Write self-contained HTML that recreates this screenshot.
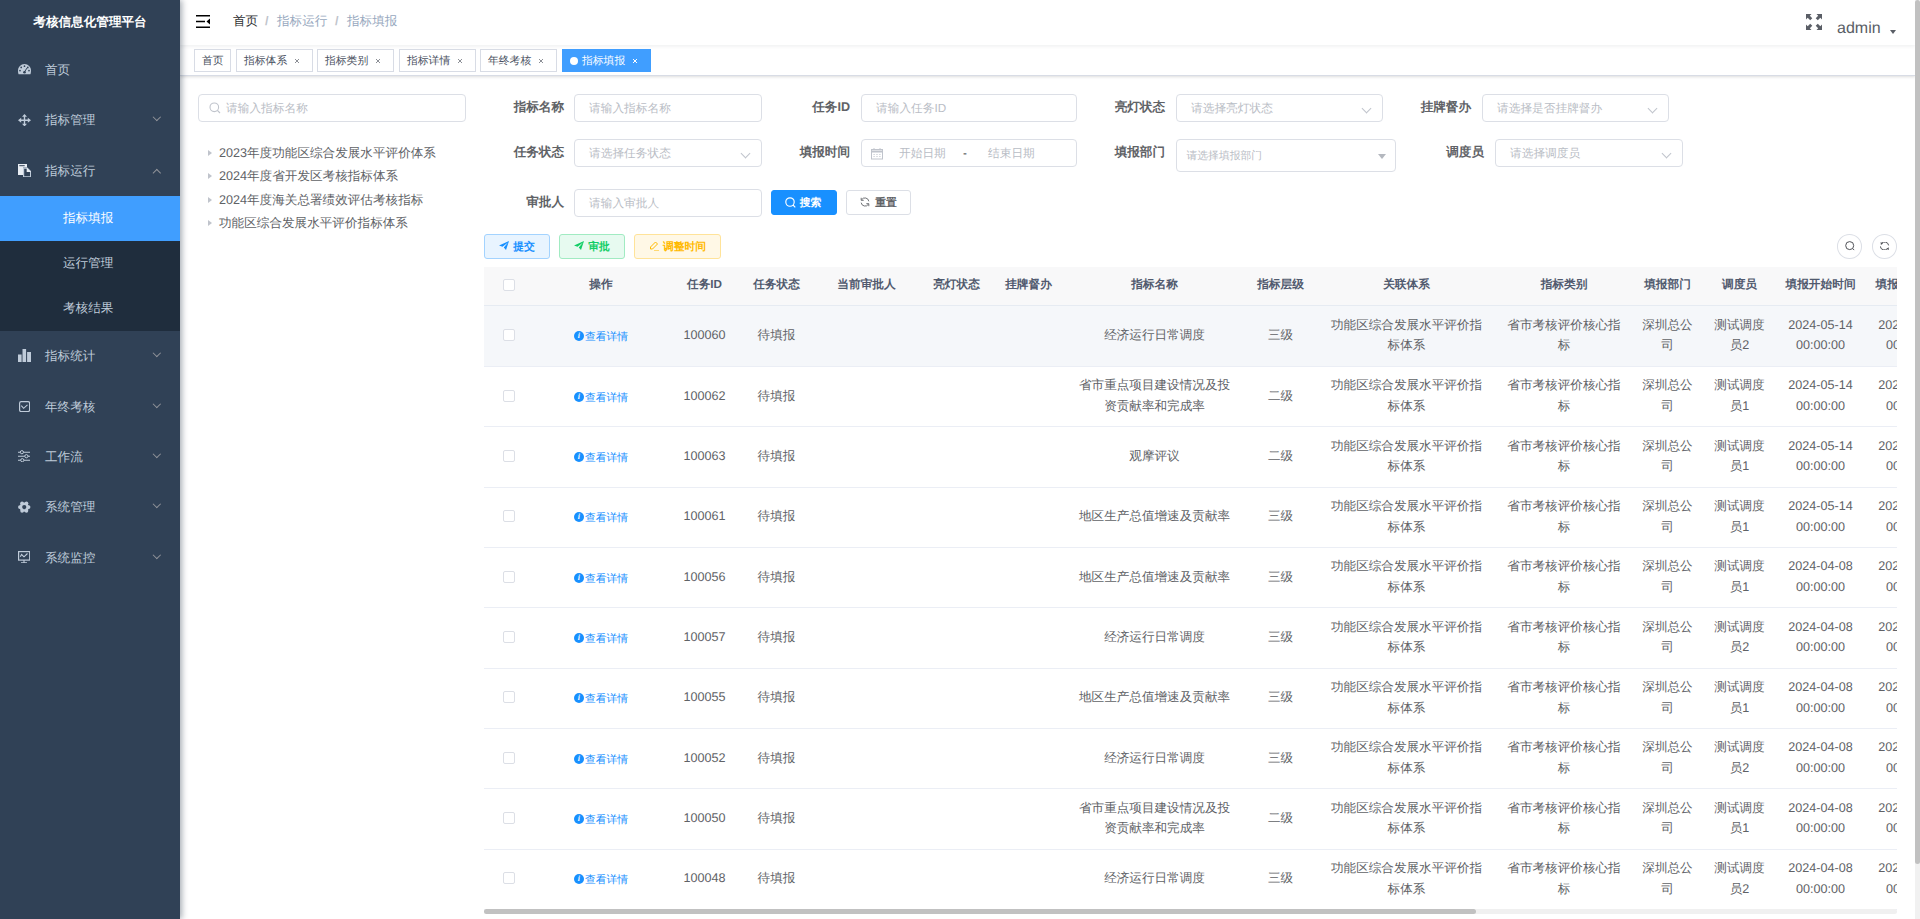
<!DOCTYPE html>
<html><head><meta charset="utf-8"><title>指标填报</title><style>
*{box-sizing:border-box;margin:0;padding:0}
html,body{width:1920px;height:919px;overflow:hidden;background:#fff;font-family:"Liberation Sans",sans-serif;color:#606266;text-rendering:geometricPrecision}
.abs{position:absolute}
#side{position:absolute;left:0;top:0;width:180px;height:919px;background:#304156;z-index:3;box-shadow:2px 0 6px rgba(0,21,41,.35)}
.logo{position:absolute;left:0;top:0;width:180px;height:45px;line-height:45px;text-align:center;color:#fff;font-weight:bold;font-size:12.6px}
.mi{position:absolute;left:0;width:180px;height:50.4px;color:#bfcbd9;font-size:12.6px;line-height:50.4px}
.mi .tx{position:absolute;left:45px;top:0}
.mi svg.ic{position:absolute;left:18px;top:19px}
.mi .chev{position:absolute;left:153px;top:22px;width:8px;height:8px}
.sub{position:absolute;left:0;top:196.2px;width:180px;height:135px;background:#1f2d3d}
.si{position:absolute;left:0;width:180px;height:45px;line-height:45px;color:#bfcbd9;font-size:12.6px}
.si .tx{position:absolute;left:63px;top:0}
.si.act{background:#409eff;color:#fff}
#nav{position:absolute;left:180px;top:0;width:1735px;height:45px;background:#fff;box-shadow:0 1px 4px rgba(0,21,41,.08);z-index:2}
.bc{position:absolute;top:0;line-height:43px;font-size:12.6px;white-space:nowrap}
#tags{position:absolute;left:180px;top:45px;width:1735px;height:31px;background:#fff;border-bottom:1px solid #d8dce5;box-shadow:0 1px 3px 0 rgba(0,0,0,.12),0 0 3px 0 rgba(0,0,0,.04);z-index:1}
.tag{position:absolute;top:4px;height:23px;border:1px solid #d8dce5;color:#495060;background:#fff;font-size:10.8px;white-space:nowrap}
.tag .x{position:absolute;top:8px}
.tt{position:absolute;top:0;line-height:22px;font-weight:normal}
.tag.act{background:#409eff;border-color:#409eff;color:#fff}
.tag.act .dot{position:absolute;left:7px;top:6.5px;width:8px;height:8px;border-radius:50%;background:#fff}
.inp{position:absolute;height:28px;border:1px solid #dcdfe6;border-radius:4px;background:#fff;font-size:11.7px;color:#b9bdc5;line-height:27.6px;padding-left:14px;white-space:nowrap;overflow:hidden}
.lbl{position:absolute;font-size:12.6px;font-weight:bold;color:#606266;line-height:26.6px;text-align:right;white-space:nowrap}
.arr{position:absolute;right:12px;top:10px;width:7px;height:7px;border-right:1px solid #c0c4cc;border-bottom:1px solid #c0c4cc;transform:rotate(45deg)}
.btn{position:absolute;height:25px;border-radius:3px;font-size:10.8px;line-height:24.4px;font-weight:bold;text-align:center;white-space:nowrap;border:1px solid}
.tree{position:absolute;left:208px;font-size:12.6px;color:#606266;white-space:nowrap;line-height:23px}
.tree .tri{display:inline-block;width:0;height:0;border-left:4px solid #c0c4cc;border-top:3.5px solid transparent;border-bottom:3.5px solid transparent;margin-right:7px;vertical-align:1px}
#tblwrap{position:absolute;left:484px;top:267px;width:1413px;height:648px;overflow:hidden}
table.tb{border-collapse:collapse;table-layout:fixed}
.tb th{height:38.5px;background:#f8f8f9;color:#515a6e;font-size:11.7px;font-weight:bold;border-bottom:1px solid #e6ebf2;text-align:center;padding:0}
.tb td{border-bottom:1px solid #ebeef5;font-size:12.6px;color:#606266;text-align:center;padding:0;background:#fff}
.tb tr.hov td{background:#f5f7fa}
.tb .cell{line-height:20.7px;padding:0 9px;white-space:nowrap;position:relative;top:-.8px}
.tb th .cell{top:-.6px}
.cb{display:inline-block;width:12px;height:12px;margin-left:1px;border:1px solid #dcdfe6;border-radius:2px;background:#fff;vertical-align:middle}
.lnk{color:#1890ff;font-size:10.8px}
.ii{display:inline-block;width:10px;height:10px;border-radius:50%;background:#1890ff;color:#fff;font-size:8px;line-height:10px;font-style:italic;font-weight:bold;text-align:center;vertical-align:2px;margin-right:1px;font-family:"Liberation Serif",serif}
#hs{position:absolute;left:484px;top:909px;width:1413px;height:5px;background:#f0f0f0;border-radius:3px}
#hs i{position:absolute;left:0;top:0;width:992px;height:5px;background:#c1c1c1;border-radius:3px}
#vs{position:absolute;left:1915px;top:0;width:5px;height:919px;background:#f1f1f1;z-index:5}
#vs i{position:absolute;left:0;top:0;width:5px;height:864px;background:#c1c1c1;border-radius:3px}
.cir{position:absolute;top:234px;width:25.3px;height:24.8px;border:1px solid #dcdfe6;border-radius:50%;background:#fff}

.tb th .cb{position:relative;top:-1.5px}
.tb td .cb{position:relative;top:-1.8px}
.lnk{position:relative;top:1.6px}

</style></head><body>
<div id="side">
  <div class="logo">考核信息化管理平台</div>
  <div class="mi" style="top:45px"><svg class="ic" style="left:18px;top:19px" width="13" height="10.5" viewBox="0 0 13 10.5"><path d="M.6 10.3C.2 9.3 0 8.2 0 6.6 0 3 2.9 0 6.5 0S13 3 13 6.6c0 1.6-.2 2.7-.6 3.7z" fill="#bfcbd9"/><g fill="#304156"><circle cx="2" cy="6.6" r=".85"/><circle cx="3.2" cy="3.4" r=".85"/><circle cx="6.5" cy="2.2" r=".85"/><circle cx="9.8" cy="3.4" r=".85"/><circle cx="11" cy="6.6" r=".85"/><circle cx="6.5" cy="8.3" r="1.3"/></g><path d="M6.2 8.3L9.3 3.6" stroke="#304156" stroke-width="1"/></svg><span class="tx">首页</span></div>
  <div class="mi" style="top:95.4px"><svg class="ic" style="left:18px;top:18.3px" width="13" height="12.5" viewBox="0 0 13 12.5"><path d="M6.5 0L9 2.8H7.2v2.7h2.6V3.7L13 6.25 9.8 8.8V7H7.2v2.7H9l-2.5 2.8L4 9.7h1.8V7H3.2v1.8L0 6.25 3.2 3.7v1.8h2.6V2.8H4z" fill="#bfcbd9"/></svg><span class="tx">指标管理</span><span class="chev" style="border-right:1px solid #909399;border-bottom:1px solid #909399;transform:rotate(45deg);top:19px;left:154px;width:5.6px;height:5.6px"></span></div>
  <div class="mi" style="top:145.8px"><svg class="ic" style="left:18px;top:17.9px" width="13.2" height="13.4" viewBox="0 0 13.2 13.4"><path d="M0 0h9v3.5H5v7.5H0z" fill="#e8edf3"/><path d="M1.3 1.7h5.4" stroke="#304156" stroke-width="1"/><path d="M5.6 4.1h3.6l3.4 3.4v5.3H5.6z" fill="none" stroke="#bfcbd9" stroke-width="1.2"/><path d="M8.7 3.6l4.5 4.5H8.7z" fill="#e8edf3"/></svg><span class="tx">指标运行</span><span class="chev" style="border-left:1px solid #909399;border-top:1px solid #909399;transform:rotate(45deg);top:24.5px;left:154px;width:5.6px;height:5.6px"></span></div>
  <div class="sub">
    <div class="si act" style="top:0"><span class="tx">指标填报</span></div>
    <div class="si" style="top:45px"><span class="tx">运行管理</span></div>
    <div class="si" style="top:90px"><span class="tx">考核结果</span></div>
  </div>
  <div class="mi" style="top:331.2px"><svg class="ic" style="left:18px;top:17.7px" width="13" height="13" viewBox="0 0 13 13"><path d="M0 5.5h3.6V13H0zM4.5 0h3.6v13H4.5zM9.1 3h3.9v10H9.1z" fill="#bfcbd9"/></svg><span class="tx">指标统计</span><span class="chev" style="border-right:1px solid #909399;border-bottom:1px solid #909399;transform:rotate(45deg);top:19px;left:154px;width:5.6px;height:5.6px"></span></div>
  <div class="mi" style="top:381.6px"><svg class="ic" style="left:18.9px;top:19.3px" width="11.2" height="11.2" viewBox="0 0 11.2 11.2"><rect x=".6" y=".6" width="10" height="10" rx="1.6" fill="none" stroke="#bfcbd9" stroke-width="1.2"/><path d="M2.3 4.6l2.3 2.7 3.9-3.4" fill="none" stroke="#bfcbd9" stroke-width="1.1"/></svg><span class="tx">年终考核</span><span class="chev" style="border-right:1px solid #909399;border-bottom:1px solid #909399;transform:rotate(45deg);top:19px;left:154px;width:5.6px;height:5.6px"></span></div>
  <div class="mi" style="top:432px"><svg class="ic" style="left:18px;top:18.3px" width="12.3" height="12" viewBox="0 0 12.3 12"><path d="M0 2.2h12.3M0 6.2h12.3M0 10.2h12.3" stroke="#bfcbd9" stroke-width="1.1"/><circle cx="3.9" cy="2.2" r="1.6" fill="#304156" stroke="#bfcbd9" stroke-width="1"/><circle cx="8.4" cy="6.2" r="1.6" fill="#304156" stroke="#bfcbd9" stroke-width="1"/><circle cx="4.3" cy="10.2" r="1.6" fill="#304156" stroke="#bfcbd9" stroke-width="1"/></svg><span class="tx">工作流</span><span class="chev" style="border-right:1px solid #909399;border-bottom:1px solid #909399;transform:rotate(45deg);top:19px;left:154px;width:5.6px;height:5.6px"></span></div>
  <div class="mi" style="top:482.4px"><svg class="ic" style="left:18px;top:18.5px" width="12.5" height="12.2" viewBox="0 0 12.5 12.2"><g fill="#bfcbd9"><circle cx="6.25" cy="6.1" r="4.6"/><circle cx="10.60" cy="6.10" r="1.85"/><circle cx="8.43" cy="9.87" r="1.85"/><circle cx="4.08" cy="9.87" r="1.85"/><circle cx="1.90" cy="6.10" r="1.85"/><circle cx="4.07" cy="2.33" r="1.85"/><circle cx="8.43" cy="2.33" r="1.85"/></g><circle cx="6.25" cy="6.1" r="2.1" fill="#304156"/></svg><span class="tx">系统管理</span><span class="chev" style="border-right:1px solid #909399;border-bottom:1px solid #909399;transform:rotate(45deg);top:19px;left:154px;width:5.6px;height:5.6px"></span></div>
  <div class="mi" style="top:532.8px"><svg class="ic" style="left:18px;top:17.9px" width="12.3" height="12.5" viewBox="0 0 12.3 12.5"><rect x=".6" y=".6" width="11.1" height="8.5" fill="none" stroke="#bfcbd9" stroke-width="1.2"/><path d="M2.3 5.8l1.3-2.3 2.4 2.3 3.5-3.3M6 9.1v2.5M3 11.8h6" fill="none" stroke="#bfcbd9" stroke-width="1.1"/></svg><span class="tx">系统监控</span><span class="chev" style="border-right:1px solid #909399;border-bottom:1px solid #909399;transform:rotate(45deg);top:19px;left:154px;width:5.6px;height:5.6px"></span></div>
</div>

<div id="nav">
  <svg class="abs" style="left:16px;top:14.5px" width="14" height="13" viewBox="0 0 14 13"><path d="M0 0h14v1.6H0zM0 5.7h9v1.6H0zM0 11.4h14V13H0z" fill="#000"/><path d="M14 3.5v6L10.5 6.5z" fill="#000"/></svg>
  <span class="bc" style="left:53px;color:#303133">首页</span>
  <span class="bc" style="left:85px;color:#c0c4cc;font-weight:bold">/</span>
  <span class="bc" style="left:97px;color:#97a8be">指标运行</span>
  <span class="bc" style="left:155px;color:#c0c4cc;font-weight:bold">/</span>
  <span class="bc" style="left:167px;color:#97a8be">指标填报</span>
  <svg class="abs" style="left:1626px;top:14px" width="16" height="16" viewBox="0 0 16 16"><g fill="#5a5e66"><path d="M0 0h5.5L3.8 1.7 6.3 4.2 4.2 6.3 1.7 3.8 0 5.5z"/><path d="M16 0v5.5l-1.7-1.7-2.5 2.5-2.1-2.1 2.5-2.5L10.5 0z"/><path d="M0 16v-5.5l1.7 1.7 2.5-2.5 2.1 2.1-2.5 2.5L5.5 16z"/><path d="M16 16h-5.5l1.7-1.7-2.5-2.5 2.1-2.1 2.5 2.5L16 10.5z"/></g></svg>
  <span class="abs" style="left:1657px;top:16.7px;font-size:16px;color:#5a5e66;line-height:24px">admin</span>
  <span class="abs" style="left:1710px;top:30px;width:0;height:0;border-left:3.5px solid transparent;border-right:3.5px solid transparent;border-top:4px solid #5a5e66"></span>
</div>

<div id="tags">
  <span class="tag" style="left:14px;width:37px"><b class="tt" style="left:7px">首页</b></span>
  <span class="tag" style="left:56px;width:77px"><b class="tt" style="left:7px">指标体系</b><svg class="x" style="left:57.3px" width="6" height="6" viewBox="0 0 6 6"><path d="M1 1l4 4M5 1l-4 4" stroke="#8c8f96" stroke-width="1"/></svg></span>
  <span class="tag" style="left:137px;width:77px"><b class="tt" style="left:7px">指标类别</b><svg class="x" style="left:57.3px" width="6" height="6" viewBox="0 0 6 6"><path d="M1 1l4 4M5 1l-4 4" stroke="#8c8f96" stroke-width="1"/></svg></span>
  <span class="tag" style="left:219px;width:77px"><b class="tt" style="left:7px">指标详情</b><svg class="x" style="left:57.3px" width="6" height="6" viewBox="0 0 6 6"><path d="M1 1l4 4M5 1l-4 4" stroke="#8c8f96" stroke-width="1"/></svg></span>
  <span class="tag" style="left:300px;width:77px"><b class="tt" style="left:7px">年终考核</b><svg class="x" style="left:57.3px" width="6" height="6" viewBox="0 0 6 6"><path d="M1 1l4 4M5 1l-4 4" stroke="#8c8f96" stroke-width="1"/></svg></span>
  <span class="tag act" style="left:382px;width:89px"><span class="dot"></span><b class="tt" style="left:19px">指标填报</b><svg class="x" style="left:69px" width="6" height="6" viewBox="0 0 6 6"><path d="M1 1l4 4M5 1l-4 4" stroke="#fff" stroke-width="1"/></svg></span>
</div>

<!-- left tree -->
<div class="inp" style="left:198px;top:94px;width:268px;padding-left:27px">请输入指标名称<svg class="abs" style="left:10px;top:7px" width="12" height="12" viewBox="0 0 12 12"><circle cx="5.3" cy="5.3" r="4.3" fill="none" stroke="#c0c4cc" stroke-width="1.1"/><path d="M8.5 8.5l2.5 2.5" stroke="#c0c4cc" stroke-width="1.1"/></svg></div>
<div class="tree" style="top:141.5px"><span class="tri"></span>2023年度功能区综合发展水平评价体系</div>
<div class="tree" style="top:165px"><span class="tri"></span>2024年度省开发区考核指标体系</div>
<div class="tree" style="top:188.5px"><span class="tri"></span>2024年度海关总署绩效评估考核指标</div>
<div class="tree" style="top:212px"><span class="tri"></span>功能区综合发展水平评价指标体系</div>

<!-- form -->
<div class="lbl" style="left:474px;top:94px;width:90px">指标名称</div>
<div class="inp" style="left:574px;top:94px;width:188px">请输入指标名称</div>
<div class="lbl" style="left:760px;top:94px;width:90px">任务ID</div>
<div class="inp" style="left:861px;top:94px;width:216px">请输入任务ID</div>
<div class="lbl" style="left:1075px;top:94px;width:90px">亮灯状态</div>
<div class="inp" style="left:1176px;top:94px;width:207px">请选择亮灯状态<span class="arr"></span></div>
<div class="lbl" style="left:1381px;top:94px;width:90px">挂牌督办</div>
<div class="inp" style="left:1482px;top:94px;width:187px">请选择是否挂牌督办<span class="arr"></span></div>

<div class="lbl" style="left:474px;top:139px;width:90px">任务状态</div>
<div class="inp" style="left:574px;top:139px;width:188px">请选择任务状态<span class="arr"></span></div>
<div class="lbl" style="left:760px;top:139px;width:90px">填报时间</div>
<div class="inp" style="left:861px;top:139px;width:216px;padding-left:0"><svg class="abs" style="left:9px;top:8px" width="12" height="12" viewBox="0 0 12 12"><rect x=".5" y="1.5" width="11" height="9.5" fill="none" stroke="#c0c4cc"/><path d="M.5 3.5h11" stroke="#c0c4cc" stroke-width="2"/><path d="M3 0v2M9 0v2M2.5 6.5h1.2M5.4 6.5h1.2M8.3 6.5h1.2M2.5 8.5h1.2M5.4 8.5h1.2M8.3 8.5h1.2" stroke="#c0c4cc" stroke-width=".9"/></svg><span class="abs" style="left:37px">开始日期</span><span class="abs" style="left:101px;color:#303133">-</span><span class="abs" style="left:126px">结束日期</span></div>
<div class="lbl" style="left:1075px;top:139px;width:90px">填报部门</div>
<div class="inp" style="left:1176px;top:139px;width:220px;height:33px;line-height:32.2px;padding-left:9.5px;font-size:10.8px">请选择填报部门<span class="abs" style="right:9.5px;top:13.5px;width:0;height:0;border-left:4.4px solid transparent;border-right:4.4px solid transparent;border-top:5px solid #b4b8bf"></span></div>
<div class="lbl" style="left:1394px;top:139px;width:90px">调度员</div>
<div class="inp" style="left:1495px;top:139px;width:188px">请选择调度员<span class="arr"></span></div>

<div class="lbl" style="left:474px;top:188.5px;width:90px">审批人</div>
<div class="inp" style="left:574px;top:188.5px;width:188px">请输入审批人</div>
<div class="btn" style="left:771px;top:190px;width:66px;background:#1890ff;border-color:#1890ff;color:#fff"><svg style="vertical-align:-1.5px;margin-right:4px;margin-left:-2px" width="11" height="11" viewBox="0 0 11 11"><circle cx="5" cy="5" r="4.2" fill="none" stroke="#fff" stroke-width="1.15"/><path d="M8 8l2.3 2.3" stroke="#fff" stroke-width="1.15"/></svg>搜索</div>
<div class="btn" style="left:846px;top:190px;width:65px;background:#fff;border-color:#dcdfe6;color:#606266"><svg style="vertical-align:-1px;margin-right:5px" width="10" height="10" viewBox="0 0 10 10"><path d="M8.8 4.3A3.9 3.9 0 0 0 1.6 2.8M1.2 5.7a3.9 3.9 0 0 0 7.2 1.5" fill="none" stroke="#606266" stroke-width=".9"/><path d="M1.2 .8v2.5h2.5M8.8 9.2V6.7H6.3" fill="none" stroke="#606266" stroke-width=".9"/></svg>重置</div>

<div class="btn" style="left:484px;top:234px;width:66px;background:#e8f4ff;border-color:#a3d3ff;color:#1890ff"><svg style="vertical-align:-1px;margin-right:4px" width="10" height="10" viewBox="0 0 10 10"><path d="M0 4.5L10 0 7 9 4.8 6.5 9 1.5 3.5 5.8z" fill="#1890ff"/></svg>提交</div>
<div class="btn" style="left:559px;top:234px;width:66px;background:#e7faf0;border-color:#a1ebc2;color:#13ce66"><svg style="vertical-align:-1px;margin-right:4px" width="10" height="10" viewBox="0 0 10 10"><path d="M0 4.5L10 0 7 9 4.8 6.5 9 1.5 3.5 5.8z" fill="#13ce66"/></svg>审批</div>
<div class="btn" style="left:634px;top:234px;width:87px;background:#fff8e6;border-color:#ffe399;color:#ffba00"><svg style="vertical-align:-1px;margin-right:4px" width="10" height="10" viewBox="0 0 10 10"><path d="M6.5 1l2 2-5 5H1.5V6z" fill="none" stroke="#ffba00" stroke-width="1"/><path d="M5 10h5" stroke="#ffba00"/></svg>调整时间</div>

<div class="cir" style="left:1837px"><svg class="abs" style="left:7.3px;top:5.8px" width="11" height="11" viewBox="0 0 11 11"><circle cx="4.7" cy="4.6" r="4" fill="none" stroke="#505257" stroke-width="1"/><path d="M7.6 7.5l1.6 1.6" stroke="#505257" stroke-width="1"/></svg></div>
<div class="cir" style="left:1871.5px"><svg class="abs" style="left:7.6px;top:6.9px" width="9.5" height="8.5" viewBox="0 0 9.5 8.5"><path d="M8.6 3.4A4 3.6 0 0 0 1.3 1.6" fill="none" stroke="#505257" stroke-width="1"/><path d="M.4 4.4A4 3.6 0 0 0 7.7 6.4" fill="none" stroke="#505257" stroke-width="1"/><path d="M.6 0l2.4 1.6L.9 3z" fill="#505257"/><path d="M8.7 8.2L6.6 6.8l2.2-1.6z" fill="#505257"/></svg></div>

<div id="tblwrap">
<table class="tb" style="width:1471.5px"><colgroup><col style="width:49.5px"><col style="width:135.0px"><col style="width:72.0px"><col style="width:72.0px"><col style="width:108.0px"><col style="width:72.0px"><col style="width:72.0px"><col style="width:180.0px"><col style="width:72.0px"><col style="width:180.0px"><col style="width:135.0px"><col style="width:72.0px"><col style="width:72.0px"><col style="width:90.0px"><col style="width:90.0px"></colgroup>
<thead><tr><th><span class="cb"></span></th><th><div class="cell">操作</div></th><th><div class="cell">任务ID</div></th><th><div class="cell">任务状态</div></th><th><div class="cell">当前审批人</div></th><th><div class="cell">亮灯状态</div></th><th><div class="cell">挂牌督办</div></th><th><div class="cell">指标名称</div></th><th><div class="cell">指标层级</div></th><th><div class="cell">关联体系</div></th><th><div class="cell">指标类别</div></th><th><div class="cell">填报部门</div></th><th><div class="cell">调度员</div></th><th><div class="cell">填报开始时间</div></th><th><div class="cell">填报结束时间</div></th></tr></thead><tbody>
<tr class="hov" style="height:61px"><td><span class="cb"></span></td><td><div class="cell"><span class="lnk"><i class="ii">i</i>查看详情</span></div></td><td><div class="cell">100060</div></td><td><div class="cell">待填报</div></td><td><div class="cell"></div></td><td><div class="cell"></div></td><td><div class="cell"></div></td><td><div class="cell">经济运行日常调度</div></td><td><div class="cell">三级</div></td><td><div class="cell">功能区综合发展水平评价指<br>标体系</div></td><td><div class="cell">省市考核评价核心指<br>标</div></td><td><div class="cell">深圳总公<br>司</div></td><td><div class="cell">测试调度<br>员2</div></td><td><div class="cell">2024-05-14<br>00:00:00</div></td><td><div class="cell">2024-05-14<br>00:00:00</div></td></tr>
<tr style="height:60.35px"><td><span class="cb"></span></td><td><div class="cell"><span class="lnk"><i class="ii">i</i>查看详情</span></div></td><td><div class="cell">100062</div></td><td><div class="cell">待填报</div></td><td><div class="cell"></div></td><td><div class="cell"></div></td><td><div class="cell"></div></td><td><div class="cell">省市重点项目建设情况及投<br>资贡献率和完成率</div></td><td><div class="cell">二级</div></td><td><div class="cell">功能区综合发展水平评价指<br>标体系</div></td><td><div class="cell">省市考核评价核心指<br>标</div></td><td><div class="cell">深圳总公<br>司</div></td><td><div class="cell">测试调度<br>员1</div></td><td><div class="cell">2024-05-14<br>00:00:00</div></td><td><div class="cell">2024-05-14<br>00:00:00</div></td></tr>
<tr style="height:60.35px"><td><span class="cb"></span></td><td><div class="cell"><span class="lnk"><i class="ii">i</i>查看详情</span></div></td><td><div class="cell">100063</div></td><td><div class="cell">待填报</div></td><td><div class="cell"></div></td><td><div class="cell"></div></td><td><div class="cell"></div></td><td><div class="cell">观摩评议</div></td><td><div class="cell">二级</div></td><td><div class="cell">功能区综合发展水平评价指<br>标体系</div></td><td><div class="cell">省市考核评价核心指<br>标</div></td><td><div class="cell">深圳总公<br>司</div></td><td><div class="cell">测试调度<br>员1</div></td><td><div class="cell">2024-05-14<br>00:00:00</div></td><td><div class="cell">2024-05-14<br>00:00:00</div></td></tr>
<tr style="height:60.35px"><td><span class="cb"></span></td><td><div class="cell"><span class="lnk"><i class="ii">i</i>查看详情</span></div></td><td><div class="cell">100061</div></td><td><div class="cell">待填报</div></td><td><div class="cell"></div></td><td><div class="cell"></div></td><td><div class="cell"></div></td><td><div class="cell">地区生产总值增速及贡献率</div></td><td><div class="cell">三级</div></td><td><div class="cell">功能区综合发展水平评价指<br>标体系</div></td><td><div class="cell">省市考核评价核心指<br>标</div></td><td><div class="cell">深圳总公<br>司</div></td><td><div class="cell">测试调度<br>员1</div></td><td><div class="cell">2024-05-14<br>00:00:00</div></td><td><div class="cell">2024-05-14<br>00:00:00</div></td></tr>
<tr style="height:60.35px"><td><span class="cb"></span></td><td><div class="cell"><span class="lnk"><i class="ii">i</i>查看详情</span></div></td><td><div class="cell">100056</div></td><td><div class="cell">待填报</div></td><td><div class="cell"></div></td><td><div class="cell"></div></td><td><div class="cell"></div></td><td><div class="cell">地区生产总值增速及贡献率</div></td><td><div class="cell">三级</div></td><td><div class="cell">功能区综合发展水平评价指<br>标体系</div></td><td><div class="cell">省市考核评价核心指<br>标</div></td><td><div class="cell">深圳总公<br>司</div></td><td><div class="cell">测试调度<br>员1</div></td><td><div class="cell">2024-04-08<br>00:00:00</div></td><td><div class="cell">2024-04-08<br>00:00:00</div></td></tr>
<tr style="height:60.35px"><td><span class="cb"></span></td><td><div class="cell"><span class="lnk"><i class="ii">i</i>查看详情</span></div></td><td><div class="cell">100057</div></td><td><div class="cell">待填报</div></td><td><div class="cell"></div></td><td><div class="cell"></div></td><td><div class="cell"></div></td><td><div class="cell">经济运行日常调度</div></td><td><div class="cell">三级</div></td><td><div class="cell">功能区综合发展水平评价指<br>标体系</div></td><td><div class="cell">省市考核评价核心指<br>标</div></td><td><div class="cell">深圳总公<br>司</div></td><td><div class="cell">测试调度<br>员2</div></td><td><div class="cell">2024-04-08<br>00:00:00</div></td><td><div class="cell">2024-04-08<br>00:00:00</div></td></tr>
<tr style="height:60.35px"><td><span class="cb"></span></td><td><div class="cell"><span class="lnk"><i class="ii">i</i>查看详情</span></div></td><td><div class="cell">100055</div></td><td><div class="cell">待填报</div></td><td><div class="cell"></div></td><td><div class="cell"></div></td><td><div class="cell"></div></td><td><div class="cell">地区生产总值增速及贡献率</div></td><td><div class="cell">三级</div></td><td><div class="cell">功能区综合发展水平评价指<br>标体系</div></td><td><div class="cell">省市考核评价核心指<br>标</div></td><td><div class="cell">深圳总公<br>司</div></td><td><div class="cell">测试调度<br>员1</div></td><td><div class="cell">2024-04-08<br>00:00:00</div></td><td><div class="cell">2024-04-08<br>00:00:00</div></td></tr>
<tr style="height:60.35px"><td><span class="cb"></span></td><td><div class="cell"><span class="lnk"><i class="ii">i</i>查看详情</span></div></td><td><div class="cell">100052</div></td><td><div class="cell">待填报</div></td><td><div class="cell"></div></td><td><div class="cell"></div></td><td><div class="cell"></div></td><td><div class="cell">经济运行日常调度</div></td><td><div class="cell">三级</div></td><td><div class="cell">功能区综合发展水平评价指<br>标体系</div></td><td><div class="cell">省市考核评价核心指<br>标</div></td><td><div class="cell">深圳总公<br>司</div></td><td><div class="cell">测试调度<br>员2</div></td><td><div class="cell">2024-04-08<br>00:00:00</div></td><td><div class="cell">2024-04-08<br>00:00:00</div></td></tr>
<tr style="height:60.35px"><td><span class="cb"></span></td><td><div class="cell"><span class="lnk"><i class="ii">i</i>查看详情</span></div></td><td><div class="cell">100050</div></td><td><div class="cell">待填报</div></td><td><div class="cell"></div></td><td><div class="cell"></div></td><td><div class="cell"></div></td><td><div class="cell">省市重点项目建设情况及投<br>资贡献率和完成率</div></td><td><div class="cell">二级</div></td><td><div class="cell">功能区综合发展水平评价指<br>标体系</div></td><td><div class="cell">省市考核评价核心指<br>标</div></td><td><div class="cell">深圳总公<br>司</div></td><td><div class="cell">测试调度<br>员1</div></td><td><div class="cell">2024-04-08<br>00:00:00</div></td><td><div class="cell">2024-04-08<br>00:00:00</div></td></tr>
<tr style="height:60.35px"><td><span class="cb"></span></td><td><div class="cell"><span class="lnk"><i class="ii">i</i>查看详情</span></div></td><td><div class="cell">100048</div></td><td><div class="cell">待填报</div></td><td><div class="cell"></div></td><td><div class="cell"></div></td><td><div class="cell"></div></td><td><div class="cell">经济运行日常调度</div></td><td><div class="cell">三级</div></td><td><div class="cell">功能区综合发展水平评价指<br>标体系</div></td><td><div class="cell">省市考核评价核心指<br>标</div></td><td><div class="cell">深圳总公<br>司</div></td><td><div class="cell">测试调度<br>员2</div></td><td><div class="cell">2024-04-08<br>00:00:00</div></td><td><div class="cell">2024-04-08<br>00:00:00</div></td></tr>
</tbody></table>
</div>
<div id="hs"><i></i></div>
<div id="vs"><i></i></div>

</body></html>
